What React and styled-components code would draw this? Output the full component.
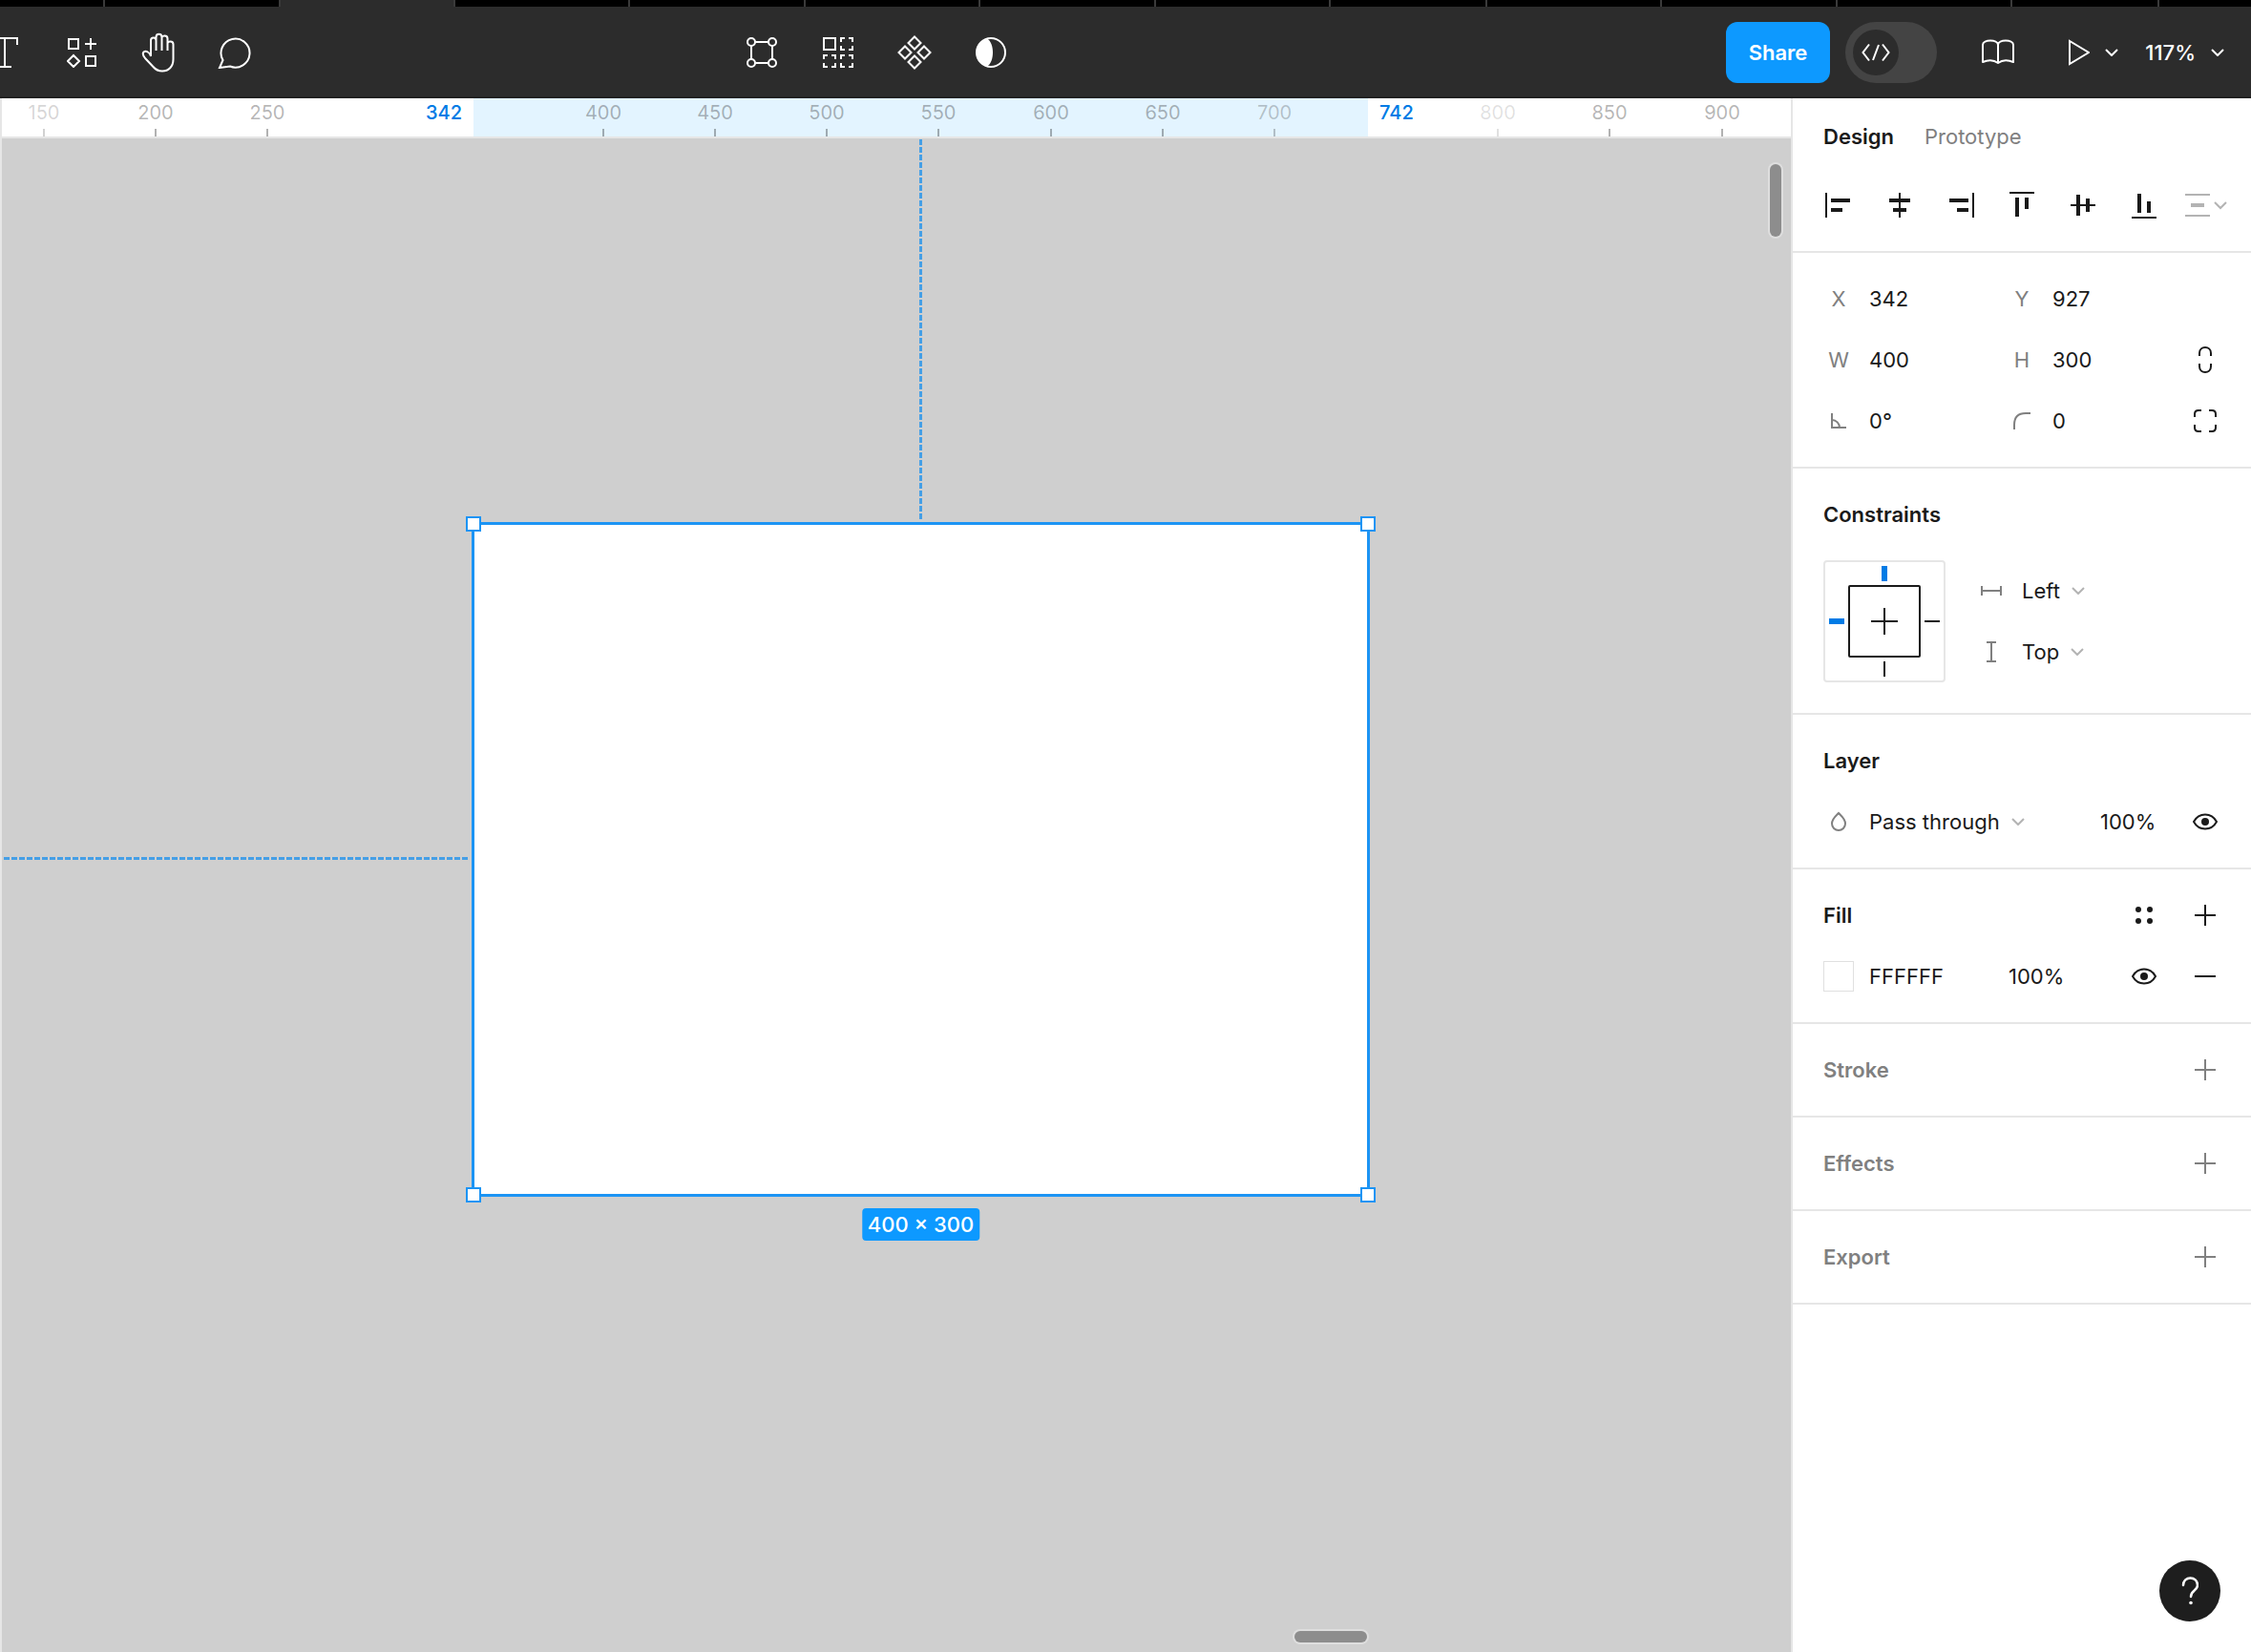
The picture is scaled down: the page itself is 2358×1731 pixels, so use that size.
import React, { useState } from 'react';
import styled, { createGlobalStyle } from 'styled-components';

const GlobalStyle = createGlobalStyle`
  * { box-sizing: border-box; }
  body {
    margin: 0;
    background: #fff;
    color: #1a1a1a;
    font-family: Inter, "Liberation Sans", sans-serif;
    font-size: 22px;
    line-height: 32px;
  }
  button, input, select { font: inherit; color: inherit; }
`;

const Page = styled.div`
  display: flex;
  flex-direction: column;
  min-height: 100vh;
`;

/* ---------- window tabs ---------- */

const TabStrip = styled.div`
  display: flex;
  height: 7px;
  overflow: hidden;
  background: #000;
`;

const WindowTab = styled.div`
  flex: none;
  width: ${p => p.$width}px;
  background: ${p => p.$active ? '#2c2c2c' : '#000'};
  border-right: 2px solid #3a3a3a;
`;

/* ---------- toolbar ---------- */

const Toolbar = styled.header`
  display: flex;
  align-items: center;
  height: 96px;
  overflow: hidden;
  background: #2c2c2c;
  box-shadow: inset 0 -2px #222;
  color: #fff;
`;

const Tools = styled.div`
  display: flex;
  margin-left: -34px;
`;

const SelectionTools = styled.div`
  display: flex;
  margin: 0 auto 0 20%;
`;

const ToolButton = styled.button`
  display: flex;
  align-items: center;
  justify-content: center;
  width: 80px;
  height: 80px;
  padding: 0;
  border: 0;
  background: none;
  cursor: pointer;
`;

const ShareButton = styled.button`
  height: 64px;
  padding: 0 24px;
  border: 0;
  border-radius: 12px;
  background: #0d99ff;
  font-weight: 600;
  cursor: pointer;
`;

const DevToggle = styled.button`
  display: flex;
  align-items: center;
  width: 96px;
  height: 64px;
  margin: 0 24px 0 16px;
  padding: 0 8px;
  border: 0;
  border-radius: 32px;
  background: #444;
  cursor: pointer;
`;

const DevKnob = styled.span`
  display: flex;
  align-items: center;
  justify-content: center;
  width: 48px;
  height: 48px;
  border-radius: 50%;
  background: #2c2c2c;
`;

const MenuButton = styled.button`
  display: flex;
  align-items: center;
  gap: 16px;
  height: 64px;
  padding: 0;
  margin: 0 28px 0 ${p => p.$indent ? 32 : 0}px;
  border: 0;
  background: none;
  font-weight: 500;
  cursor: pointer;
`;

/* ---------- canvas ---------- */

const Workspace = styled.div`
  display: grid;
  grid-template-columns: minmax(0, 1fr) 482px;
  flex: 1;
`;

const CanvasColumn = styled.main`
  display: flex;
  flex-direction: column;
  border-left: 2px solid #e6e6e6;
`;

const Ruler = styled.div`
  position: relative;
  height: 42px;
  overflow: hidden;
  background: #fff;
  border-bottom: 2px solid #e6e6e6;
  font-size: 20px;
  line-height: 30px;
`;

const RulerRange = styled.div`
  position: absolute;
  top: 0;
  bottom: 0;
  background: #e3f4ff;
`;

const RulerMark = styled.div`
  position: absolute;
  top: 0;
  bottom: 0;
  display: flex;
  flex-direction: column;
  align-items: center;
  justify-content: space-between;
  width: 60px;
  margin-left: -30px;
  color: rgba(0, 0, 0, ${p => p.$alpha});

  &::after {
    content: '';
    width: 2px;
    height: 8px;
    background: currentColor;
  }
`;

const RulerEdge = styled.div`
  position: absolute;
  top: 0;
  width: 62px;
  padding: 0 12px;
  margin-left: ${p => p.$before ? -62 : 0}px;
  text-align: ${p => p.$before ? 'right' : 'left'};
  color: #007be5;
  font-weight: 500;
`;

const Canvas = styled.div`
  position: relative;
  flex: 1;
  overflow: hidden;
  background: #cfcfcf;
`;

const Frame = styled.div`
  position: absolute;
  background: #fff;
  border: 3px solid #1c94f4;
`;

const Handle = styled.span`
  position: absolute;
  width: 16px;
  height: 16px;
  background: #fff;
  border: 2px solid #1c94f4;
  ${p => p.$v}: -9px;
  ${p => p.$h}: -9px;
`;

const SizeBadge = styled.span`
  position: absolute;
  top: 100%;
  left: 50%;
  transform: translateX(-50%);
  margin-top: 15px;
  padding: 1px 6px;
  border-radius: 4px;
  background: #0d99ff;
  color: #fff;
  font-weight: 500;
  white-space: nowrap;
`;

const Guide = styled.div`
  position: absolute;
  ${p => p.$vertical
    ? 'top: 1px; width: 3px;'
    : 'left: 2px; height: 3px;'}
  background: repeating-linear-gradient(
    ${p => p.$vertical ? '180deg' : '90deg'},
    #459fe6 0 6px, transparent 6px 8px
  );
`;

const Scrollbar = styled.div`
  position: absolute;
  border-radius: 8px;
  background: #8d8d8d;
  box-shadow: 0 0 0 2px #dedede;
  ${p => p.$vertical
    ? 'top: 27px; right: 10px; width: 12px; height: 76px;'
    : 'bottom: 10px; right: 444px; width: 76px; height: 12px;'}
`;

/* ---------- properties panel ---------- */

const Panel = styled.aside`
  display: flex;
  flex-direction: column;
  background: #fff;
  border-left: 2px solid #e6e6e6;
`;

const PanelTabs = styled.nav`
  display: flex;
  align-items: center;
  gap: 32px;
  height: 80px;
  padding: 0 32px;
`;

const PanelTab = styled.button`
  padding: 0;
  border: 0;
  background: none;
  color: ${p => p.$active ? '#1a1a1a' : '#808080'};
  font-weight: ${p => p.$active ? 600 : 400};
  cursor: pointer;
`;

const AlignRow = styled.div`
  display: flex;
  height: 82px;
  padding: 0 16px;
  border-bottom: 2px solid #e6e6e6;
`;

const Section = styled.section`
  padding: 16px 16px 16px 32px;
  border-bottom: 2px solid #e6e6e6;
`;

const Row = styled.div`
  display: flex;
  align-items: center;
  height: 64px;
`;

const Title = styled.h2`
  flex: 1;
  margin: 0;
  color: ${p => p.$muted ? '#808080' : '#1a1a1a'};
  font-size: 22px;
  font-weight: 600;
`;

const IconButton = styled.button`
  display: flex;
  align-items: center;
  justify-content: center;
  flex: none;
  width: 64px;
  height: 64px;
  padding: 0;
  border: 0;
  background: none;
  color: ${p => p.$muted ? '#808080' : '#1a1a1a'};
  cursor: pointer;
`;

const Field = styled.label`
  display: flex;
  align-items: center;
  gap: 16px;
  flex: 1;

  &:first-child {
    flex: none;
    width: 192px;
  }
`;

const FieldMark = styled.span`
  display: flex;
  justify-content: center;
  flex: none;
  width: 32px;
  color: #808080;
`;

const TextInput = styled.input`
  width: ${p => p.$width || 96}px;
  height: 48px;
  padding: 0;
  border: 0;
  outline: 0;
  background: none;
  color: #1a1a1a;
`;

const Picker = styled.label`
  display: flex;
  align-items: center;
  gap: 16px;
  flex: 1;
  height: 64px;
`;

const PickerBox = styled.span`
  display: flex;
  align-items: center;
  gap: 12px;
  color: #b3b3b3;
`;

const Select = styled.select`
  appearance: none;
  field-sizing: content;
  padding: 0;
  border: 0;
  outline: 0;
  background: none;
  color: #1a1a1a;
`;

const Constraints = styled.div`
  display: flex;
  gap: 32px;
  padding: 16px 0;
`;

const ConstraintBox = styled.div`
  width: 128px;
  height: 128px;
  border: 2px solid #e6e6e6;
  border-radius: 4px;
`;

const Swatch = styled.button`
  width: 32px;
  height: 32px;
  margin-right: 16px;
  padding: 0;
  border: 1px solid #e0e0e0;
  background: #fff;
`;

const HelpButton = styled.button`
  display: flex;
  align-items: center;
  justify-content: center;
  width: 64px;
  height: 64px;
  margin: auto 32px 32px auto;
  padding: 0;
  border: 0;
  border-radius: 50%;
  background: #1e1e1e;
  color: #fff;
  cursor: pointer;
`;

/* ---------- icons ---------- */

function Icon({ w, h, sw = 2, children }) {
  return (
    <svg width={w} height={h || w} viewBox={`0 0 ${w} ${h || w}`} fill="none"
      stroke="currentColor" strokeWidth={sw} aria-hidden="true">
      {children}
    </svg>
  );
}

const TextIcon = () => (
  <Icon w={32}><path d="M2 8V1h26v7M15 1v30M8 31h14" /></Icon>
);

const ResourcesIcon = () => (
  <Icon w={32}>
    <path d="M2 2h10v10H2zM20 20h10v10H20zM25 1v12M19 7h12M7 19l6 6-6 6-6-6z" />
  </Icon>
);

const HandIcon = () => (
  <Icon w={36} h={42}>
    <path strokeLinejoin="round" d="M10 25V8.500c0-4 5.500-4 5.500 0V19M15.500 8V5c0-4.500 6-4.500 6 0v14M21.500 6c0-3.500 6-3.500 6 0.500V19M27.500 12c0-3.500 6-3.500 6 0.500V28c0 8-5 12.500-11.500 12.500-4 0-7-1.500-9.500-4.500L4 27c-2-2.500-3-5-1.500-6.500 2.500-2 6.500 0.500 7.500 4.500" />
  </Icon>
);

const CommentIcon = () => (
  <Icon w={36} h={34}>
    <path strokeLinejoin="miter" d="M5.500 25A15 15 0 1 1 13 31.500L2 33z" />
  </Icon>
);

const EditObjectIcon = () => (
  <Icon w={34}>
    <circle cx="6" cy="6" r="4" />
    <circle cx="28" cy="6" r="4" />
    <circle cx="6" cy="28" r="4" />
    <circle cx="28" cy="28" r="4" />
    <path d="M10 6h14M10 28h14M6 10v14M28 10v14" />
  </Icon>
);

const dashedCell = 'M1 5V1h4M9 1h4v4M13 9v4H9M5 13H1V9';

const MaskGridIcon = () => (
  <Icon w={32}>
    <path d="M1 1h12v12H1z" />
    <path d={dashedCell} transform="translate(18 0)" />
    <path d={dashedCell} transform="translate(0 18)" />
    <path d={dashedCell} transform="translate(18 18)" />
  </Icon>
);

const ComponentIcon = () => (
  <Icon w={36}>
    <path d="M18 1.500l6.500 6.500-6.500 6.500-6.500-6.500zM18 21.500l6.500 6.500-6.500 6.500-6.500-6.500zM8 11.500l6.500 6.500-6.500 6.500-6.500-6.500zM28 11.500l6.500 6.500-6.500 6.500-6.500-6.500z" />
  </Icon>
);

const MaskIcon = () => (
  <Icon w={32}>
    <circle cx="16" cy="16" r="15" />
    <path d="M12 1.500A15 15 0 0 0 12 30.500C20 26 20 6 12 1.500z" fill="currentColor" stroke="none" />
  </Icon>
);

const CodeIcon = () => (
  <Icon w={30} h={20}><path d="M8 1.500L1.500 10 8 18.500M22 1.500l6.500 8.500-6.500 8.500M18 2l-6 16" /></Icon>
);

const BookIcon = () => (
  <Icon w={36} h={28}>
    <path strokeLinejoin="round" d="M18 6c0-6-16-6-16 0v18c6-2.500 12-2 16 1 4-3 10-3.500 16-1V6c0-6-16-6-16 0zM18 6v19" />
  </Icon>
);

const PlayIcon = () => (
  <Icon w={24} h={28}><path d="M3 2v24l20-12z" /></Icon>
);

const Chevron = () => (
  <Icon w={14} h={8}><path d="M1 1l6 6 6-6" /></Icon>
);

const PlusIcon = () => <Icon w={22}><path d="M11 0v22M0 11h22" /></Icon>;
const MinusIcon = () => <Icon w={22}><path d="M0 11h22" /></Icon>;

const EyeIcon = () => (
  <Icon w={26} h={18}>
    <path d="M1 9c5.500-10 18.500-10 24 0-5.500 10-18.500 10-24 0z" />
    <circle cx="13" cy="9" r="4" fill="currentColor" stroke="none" />
  </Icon>
);

const StylesIcon = () => (
  <Icon w={18}>
    <g fill="currentColor" stroke="none">
      <circle cx="3" cy="3" r="3" />
      <circle cx="15" cy="3" r="3" />
      <circle cx="3" cy="15" r="3" />
      <circle cx="15" cy="15" r="3" />
    </g>
  </Icon>
);

const LinkIcon = () => (
  <Icon w={16} h={28}><path d="M2 10V7c0-8 12-8 12 0v3M2 18v3c0 8 12 8 12 0v-3" /></Icon>
);

const CornersIcon = () => (
  <Icon w={24}>
    <path d="M1 8V5q0-4 4-4h3M16 1h3q4 0 4 4v3M23 16v3q0 4-4 4h-3M8 23H5q-4 0-4-4v-3" />
  </Icon>
);

const AngleIcon = () => (
  <Icon w={16}><path d="M1 0v15h15M1 7a8 8 0 0 1 8 8" /></Icon>
);

const RadiusIcon = () => (
  <Icon w={18}><path d="M1 18v-5C1 5 5 1 13 1h5" /></Icon>
);

const DropIcon = () => (
  <Icon w={18} h={22}>
    <path d="M9 2c-3.500 3.500-7 6-7 11a7 7 0 0 0 14 0c0-5-3.500-7.500-7-11z" />
  </Icon>
);

const HorizontalIcon = () => (
  <Icon w={22} h={10}><path d="M1 0v10M21 0v10M1 5h20" /></Icon>
);

const VerticalIcon = () => (
  <Icon w={10} h={22}><path d="M0 1h10M0 21h10M5 1v20" /></Icon>
);

const HelpIcon = () => (
  <Icon w={18} h={30} sw={2.5}>
    <path strokeLinecap="round" d="M2 9c0-10 15-10 15 0 0 6-7 5-7 12" />
    <circle cx="10" cy="27.500" r="1.800" fill="currentColor" stroke="none" />
  </Icon>
);

const ConstraintDrawing = () => (
  <svg width="124" height="124" viewBox="2 2 124 124" display="block" fill="none" stroke="#1a1a1a" strokeWidth="2">
    <rect x="27" y="27" width="74" height="74" rx="1" />
    <path d="M64 50v28M50 64h28M106 64h16M64 106v16" />
    <path d="M64 6v16M6 64h16" stroke="#007be5" strokeWidth="6" />
  </svg>
);

/* ---------- data ---------- */

const windowTabs = [110, 184, 183, 183, 184, 183, 184, 183, 164, 183, 184, 183, 154];
const ACTIVE_TAB = 2;

const marks = [
  [150, 0.18], [200, 0.3], [250, 0.3], [400, 0.3], [450, 0.3], [500, 0.3],
  [550, 0.3], [600, 0.3], [650, 0.3], [700, 0.22], [800, 0.12], [850, 0.3], [900, 0.3],
];

// each bar is x, y, width, height inside a 64px button
const alignments = [
  ['Align left', [[18, 19, 2, 26], [24, 25, 20, 4], [24, 35, 12, 4]]],
  ['Align horizontal centers', [[31, 19, 2, 26], [21, 25, 22, 4], [25, 35, 14, 4]]],
  ['Align right', [[44, 19, 2, 26], [20, 25, 20, 4], [28, 35, 12, 4]]],
  ['Align top', [[19, 18, 26, 2], [25, 24, 4, 20], [35, 24, 4, 12]]],
  ['Align vertical centers', [[19, 31, 26, 2], [25, 21, 4, 22], [35, 25, 4, 14]]],
  ['Align bottom', [[19, 44, 26, 2], [25, 20, 4, 20], [35, 28, 4, 12]]],
];

const frame = { x: 342, y: 927, w: 400, h: 300 };

const SCALE = 2.3438;
const ORIGIN = 131.3;
const FRAME_TOP = 402;
const rulerX = (value) => Math.round((value - ORIGIN) * SCALE);

/* ---------- parts ---------- */

function TopBar() {
  const [devMode, setDevMode] = useState(false);

  return (
    <Toolbar>
      <Tools>
        <ToolButton aria-label="Text"><TextIcon /></ToolButton>
        <ToolButton aria-label="Resources"><ResourcesIcon /></ToolButton>
        <ToolButton aria-label="Hand tool"><HandIcon /></ToolButton>
        <ToolButton aria-label="Add comment"><CommentIcon /></ToolButton>
      </Tools>
      <SelectionTools>
        <ToolButton aria-label="Edit object"><EditObjectIcon /></ToolButton>
        <ToolButton aria-label="Tidy up"><MaskGridIcon /></ToolButton>
        <ToolButton aria-label="Create component"><ComponentIcon /></ToolButton>
        <ToolButton aria-label="Use as mask"><MaskIcon /></ToolButton>
      </SelectionTools>
      <ShareButton>Share</ShareButton>
      <DevToggle role="switch" aria-checked={devMode} aria-label="Dev Mode" onClick={() => setDevMode(!devMode)}>
        <DevKnob><CodeIcon /></DevKnob>
      </DevToggle>
      <ToolButton aria-label="Libraries"><BookIcon /></ToolButton>
      <MenuButton $indent aria-label="Present"><PlayIcon /><Chevron /></MenuButton>
      <MenuButton>117% <Chevron /></MenuButton>
    </Toolbar>
  );
}

function CanvasArea() {
  const left = rulerX(frame.x);
  const right = rulerX(frame.x + frame.w);
  const height = Math.round(frame.h * SCALE);
  const centerX = Math.round((left + right) / 2);

  return (
    <CanvasColumn>
      <Ruler>
        <RulerRange style={{ left, width: right - left }} />
        {marks.map(([value, alpha]) => (
          <RulerMark key={value} $alpha={alpha} style={{ left: rulerX(value) }}>{value}</RulerMark>
        ))}
        <RulerEdge $before style={{ left }}>{frame.x}</RulerEdge>
        <RulerEdge style={{ left: right }}>{frame.x + frame.w}</RulerEdge>
      </Ruler>
      <Canvas>
        <Guide $vertical style={{ left: centerX - 2, height: FRAME_TOP - 4 }} />
        <Guide style={{ top: FRAME_TOP + Math.round(height / 2) - 1, width: left - 6 }} />
        <Frame style={{ left: left - 2, top: FRAME_TOP, width: right - left + 4, height: height + 4 }}>
          <Handle $v="top" $h="left" />
          <Handle $v="top" $h="right" />
          <Handle $v="bottom" $h="left" />
          <Handle $v="bottom" $h="right" />
          <SizeBadge>{frame.w} × {frame.h}</SizeBadge>
        </Frame>
        <Scrollbar $vertical />
        <Scrollbar />
      </Canvas>
    </CanvasColumn>
  );
}

function NumberField({ mark, name, value }) {
  return (
    <Field>
      <FieldMark>{mark}</FieldMark>
      <TextInput aria-label={name} defaultValue={value} />
    </Field>
  );
}

function PickerField({ icon, name, options }) {
  return (
    <Picker>
      <FieldMark>{icon}</FieldMark>
      <PickerBox>
        <Select aria-label={name}>
          {options.map(o => <option key={o}>{o}</option>)}
        </Select>
        <Chevron />
      </PickerBox>
    </Picker>
  );
}

function EmptySection({ title }) {
  return (
    <Section>
      <Row>
        <Title $muted>{title}</Title>
        <IconButton $muted aria-label={'Add ' + title.toLowerCase()}><PlusIcon /></IconButton>
      </Row>
    </Section>
  );
}

function PropertiesPanel() {
  return (
    <Panel>
      <PanelTabs>
        <PanelTab $active>Design</PanelTab>
        <PanelTab>Prototype</PanelTab>
      </PanelTabs>
      <AlignRow>
        {alignments.map(([name, bars]) => (
          <IconButton key={name} aria-label={name}>
            <svg width="64" height="64" fill="currentColor">
              {bars.map(([x, y, w, h], i) => <rect key={i} x={x} y={y} width={w} height={h} />)}
            </svg>
          </IconButton>
        ))}
        <IconButton aria-label="More alignment options">
          <svg width="64" height="64" fill="#b3b3b3">
            <path d="M11 20h26v2H11zM11 42h26v2H11zM17 30h14v4H17z" />
            <path d="M42 29l6 6 6-6" fill="none" stroke="#b3b3b3" strokeWidth="2" />
          </svg>
        </IconButton>
      </AlignRow>

      <Section>
        <Row>
          <NumberField mark="X" name="X position" value={frame.x} />
          <NumberField mark="Y" name="Y position" value={frame.y} />
        </Row>
        <Row>
          <NumberField mark="W" name="Width" value={frame.w} />
          <NumberField mark="H" name="Height" value={frame.h} />
          <IconButton aria-label="Constrain proportions"><LinkIcon /></IconButton>
        </Row>
        <Row>
          <NumberField mark={<AngleIcon />} name="Rotation" value="0°" />
          <NumberField mark={<RadiusIcon />} name="Corner radius" value="0" />
          <IconButton aria-label="Independent corners"><CornersIcon /></IconButton>
        </Row>
      </Section>

      <Section>
        <Row><Title>Constraints</Title></Row>
        <Constraints>
          <ConstraintBox><ConstraintDrawing /></ConstraintBox>
          <div>
            <PickerField icon={<HorizontalIcon />} name="Horizontal constraint" options={['Left', 'Right', 'Center']} />
            <PickerField icon={<VerticalIcon />} name="Vertical constraint" options={['Top', 'Bottom', 'Center']} />
          </div>
        </Constraints>
      </Section>

      <Section>
        <Row><Title>Layer</Title></Row>
        <Row>
          <PickerField icon={<DropIcon />} name="Blend mode" options={['Pass through', 'Normal']} />
          <TextInput $width={78} aria-label="Layer opacity" defaultValue="100%" />
          <IconButton aria-label="Toggle layer visibility"><EyeIcon /></IconButton>
        </Row>
      </Section>

      <Section>
        <Row>
          <Title>Fill</Title>
          <IconButton aria-label="Styles"><StylesIcon /></IconButton>
          <IconButton aria-label="Add fill"><PlusIcon /></IconButton>
        </Row>
        <Row>
          <Swatch aria-label="Fill color" />
          <TextInput $width={146} aria-label="Fill hex" defaultValue="FFFFFF" />
          <TextInput $width={110} aria-label="Fill opacity" defaultValue="100%" />
          <IconButton aria-label="Toggle fill visibility"><EyeIcon /></IconButton>
          <IconButton aria-label="Remove fill"><MinusIcon /></IconButton>
        </Row>
      </Section>

      <EmptySection title="Stroke" />
      <EmptySection title="Effects" />
      <EmptySection title="Export" />

      <HelpButton aria-label="Help"><HelpIcon /></HelpButton>
    </Panel>
  );
}

export default function App() {
  return (
    <Page>
      <GlobalStyle />
      <TabStrip>
        {windowTabs.map((width, i) => (
          <WindowTab key={i} $width={width} $active={i === ACTIVE_TAB} />
        ))}
      </TabStrip>
      <TopBar />
      <Workspace>
        <CanvasArea />
        <PropertiesPanel />
      </Workspace>
    </Page>
  );
}
